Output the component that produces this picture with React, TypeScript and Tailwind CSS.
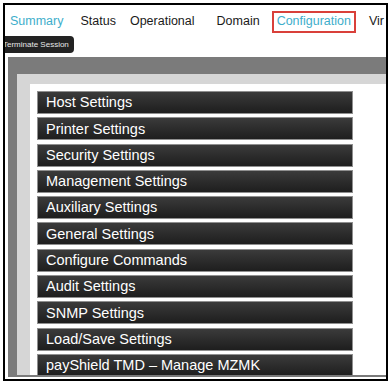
const tabs = [
  { label: "Summary", ml: "ml-[5px]", active: true },
  { label: "Status", ml: "ml-[17px]" },
  { label: "Operational", ml: "ml-[14px]" },
  { label: "Domain", ml: "ml-[22px]" },
];

const settings = [
  "Host Settings",
  "Printer Settings",
  "Security Settings",
  "Management Settings",
  "Auxiliary Settings",
  "General Settings",
  "Configure Commands",
  "Audit Settings",
  "SNMP Settings",
  "Load/Save Settings",
  "payShield TMD – Manage MZMK",
];

const SettingButton = ({ label }: { label: string }) => {
  return (
    <div className="flex h-[23px] w-[316px] shrink-0 items-center border border-[#8f8f8f] bg-gradient-to-b from-[#3b3b3b] to-[#1e1e1e] pl-[8px] text-[14.5px] leading-none text-white">
      {label}
    </div>
  );
};

export default function App() {
  return (
    <div
      className="h-[383px] w-[391px] overflow-hidden bg-white p-[3px]"
      style={{ fontFamily: '"Liberation Sans", Arial, sans-serif' }}
    >
      <div className="flex h-[378px] w-[385px] flex-col overflow-hidden border-2 border-black bg-white">
        <div className="flex h-[29px] shrink-0 items-center whitespace-nowrap pt-[3px] text-[12.5px] text-[#1a1a1a]">
          {tabs.map((t) => (
            <span key={t.label} className={`${t.ml} ${t.active ? "text-[#3eaecb]" : ""}`}>
              {t.label}
            </span>
          ))}
          <span className="ml-[12px] mt-[1px] flex h-[22px] items-center border-2 border-[#d9403a] px-[3px] text-[#3eaecb]">
            Configuration
          </span>
          <span className="ml-[13px]">Vir</span>
        </div>

        <div className="-ml-[2px] mt-[2px] flex h-[17px] w-[71px] shrink-0 items-center whitespace-nowrap rounded-r-[4px] bg-[#232323] text-[8px] text-[#e8e8e8]">
          Terminate Session
        </div>

        <div className="mb-[2px] ml-[3px] mt-[4px] flex flex-1 flex-col overflow-hidden border-b-2 border-[#7a7a7a] bg-[#7b7b7b] pl-[9px] pt-[17px]">
          <div className="flex flex-1 flex-col overflow-hidden bg-[#d6d6d6] pl-[13px] pt-[10px]">
            <div className="flex flex-1 flex-col gap-[3.3px] overflow-hidden bg-white pl-[7px] pt-[7px]">
              {settings.map((s) => (
                <SettingButton key={s} label={s} />
              ))}
            </div>
          </div>
        </div>
      </div>
    </div>
  );
}
